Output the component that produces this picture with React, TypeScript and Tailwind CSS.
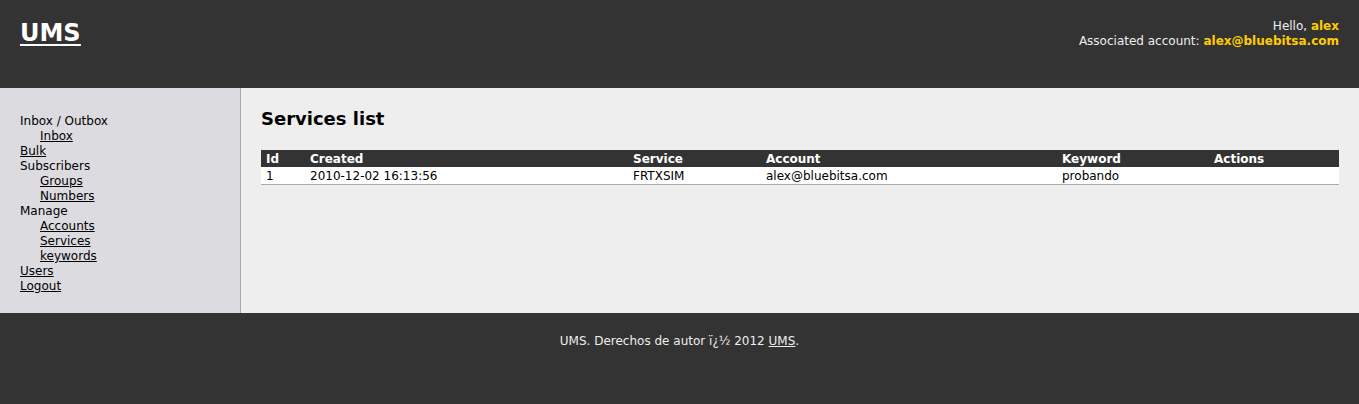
import React from 'react';

const font = { fontFamily: '"DejaVu Sans", Verdana, sans-serif' };

type NavItem = { label: string; link?: boolean; sub?: boolean };

const nav: NavItem[] = [
  { label: 'Inbox / Outbox' },
  { label: 'Inbox', link: true, sub: true },
  { label: 'Bulk', link: true },
  { label: 'Subscribers' },
  { label: 'Groups', link: true, sub: true },
  { label: 'Numbers', link: true, sub: true },
  { label: 'Manage' },
  { label: 'Accounts', link: true, sub: true },
  { label: 'Services', link: true, sub: true },
  { label: 'keywords', link: true, sub: true },
  { label: 'Users', link: true },
  { label: 'Logout', link: true },
];

const columns = [
  { name: 'Id', w: 'w-[44px]' },
  { name: 'Created', w: 'w-[323px]' },
  { name: 'Service', w: 'w-[133px]' },
  { name: 'Account', w: 'w-[296px]' },
  { name: 'Keyword', w: 'w-[152px]' },
  { name: 'Actions', w: '' },
];

const rows = [['1', '2010-12-02 16:13:56', 'FRTXSIM', 'alex@bluebitsa.com', 'probando', '']];

export default function App() {
  return (
    <div className="w-[1359px] h-[404px] flex flex-col text-[12px] leading-[15px]" style={font}>
      <header className="h-[88px] bg-[#333333] flex justify-between px-5 pt-[18px] shrink-0">
        <h1 className="text-[24px] leading-[30px] font-bold text-white underline underline-offset-[3px] decoration-2">
          <a href="#">UMS</a>
        </h1>
        <div className="text-right text-[#eeeeee] pt-px">
          <div>
            Hello, <span className="font-bold text-[#ffcc00]">alex</span>
          </div>
          <div>
            Associated account: <span className="font-bold text-[#ffcc00]">alex@bluebitsa.com</span>
          </div>
        </div>
      </header>

      <div className="flex h-[225px] shrink-0">
        <aside className="w-[241px] bg-[#dcdbe0] border-r border-[#aaaaaa] pl-5 pt-[26px] text-black">
          <ul>
            {nav.map((item) => (
              <li key={item.label} className={item.sub ? 'pl-5' : ''}>
                {item.link ? (
                  <a href="#" className="underline">
                    {item.label}
                  </a>
                ) : (
                  item.label
                )}
              </li>
            ))}
          </ul>
        </aside>

        <main className="flex-1 bg-[#eeeeee] px-5 pt-5">
          <h2 className="text-[18px] leading-[22px] font-bold text-black mb-5">Services list</h2>
          <table className="w-full border-collapse border-b border-[#aaaaaa]">
            <thead>
              <tr className="bg-[#333333] text-white">
                {columns.map((c) => (
                  <th key={c.name} className={`${c.w} text-left font-bold px-[5px] h-[17px] pt-px pb-0`}>
                    {c.name}
                  </th>
                ))}
              </tr>
            </thead>
            <tbody>
              {rows.map((r, i) => (
                <tr key={i} className="bg-white text-black">
                  {r.map((cell, j) => (
                    <td key={j} className="px-[5px] h-[17px] pt-[2px] pb-0">
                      {cell}
                    </td>
                  ))}
                </tr>
              ))}
            </tbody>
          </table>
        </main>
      </div>

      <footer className="flex-1 bg-[#333333] text-[#eeeeee] text-center pt-[21px]">
        UMS. Derechos de autor ï¿½ 2012{' '}
        <a href="#" className="underline">
          UMS
        </a>
        .
      </footer>
    </div>
  );
}
